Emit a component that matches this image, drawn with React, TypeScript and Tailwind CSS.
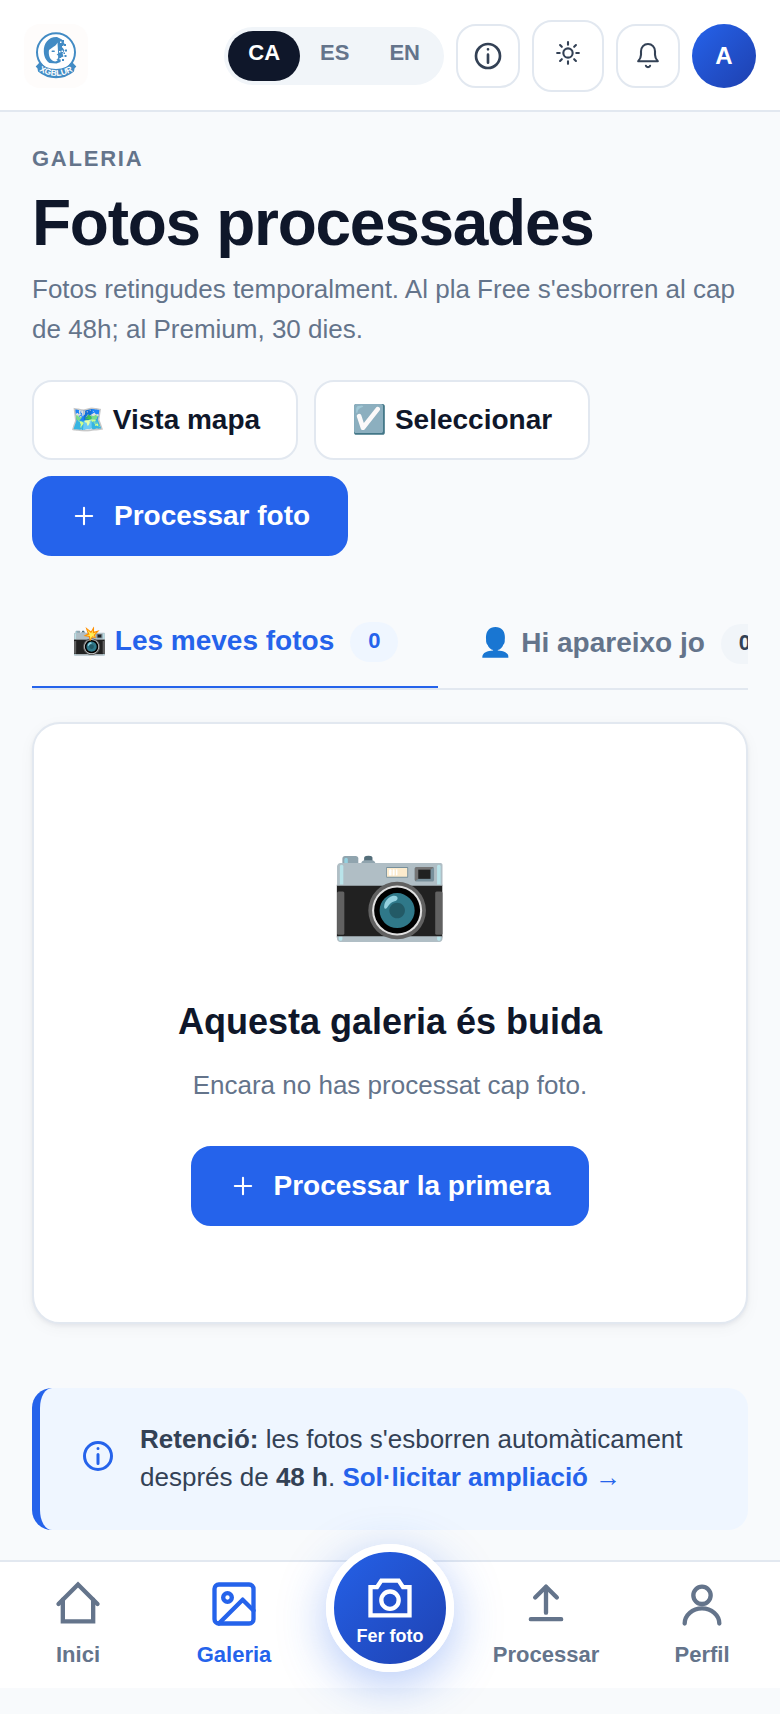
import type { ReactNode } from "react";

type IconProps = { className?: string; stroke?: number; join?: "round" | "miter"; children: ReactNode };

function Icon({ className = "", stroke = 2, join = "round", children }: IconProps) {
  return (
    <svg
      viewBox="0 0 24 24"
      fill="none"
      stroke="currentColor"
      strokeWidth={stroke}
      strokeLinecap="round"
      strokeLinejoin={join}
      aria-hidden="true"
      className={`shrink-0 ${className}`}
    >
      {children}
    </svg>
  );
}

function InfoIcon({ className }: { className: string }) {
  return (
    <Icon className={className}>
      <circle cx="12" cy="12" r="9" />
      <path d="M12 11v6M12 7h.01" />
    </Icon>
  );
}

function PlusIcon() {
  return (
    <Icon className="size-7" stroke={1.8}>
      <path d="M12 5v14M5 12h14" />
    </Icon>
  );
}

function Logo() {
  return (
    <svg viewBox="0 0 64 64" className="size-16" role="img" aria-label="XGBLUR">
      <circle cx="32" cy="28.3" r="19" fill="#fff" stroke="#428bc4" strokeWidth="2" />
      <path
        d="M33 13c-8-.5-13.500 6-13.200 14.500.2 6 2.700 9.500 5.700 11.500l7 .5 4-1.500.5-4.500 2.500-1-1-3 2-3-2-3 2-4-2.500-4z"
        fill="#428bc4"
      />
      <path
        d="M33.500 18.500c-1 3-4.500 4.500-8.500 7.500-.8 5 .8 9.500 4.300 11 2 .8 3.700.3 4.500-1l-1.500-.8 1.800-.7v-3l-1.500-.8 1.500-1.200z"
        fill="#fff"
      />
      <path d="M28.200 27.200h2" stroke="#428bc4" strokeWidth="1.400" strokeLinecap="round" />
      <path
        d="M38 16h2v2h-2zM40 20h2v2h-2zM36.500 20h1.500v1.500h-1.500zM41 25.500h2v2h-2zM37 24h2v1.500h-2zM40.500 31h2v2h-2zM38 35h2v2h-2zM39.500 28.500h1.500v1.500h-1.500zM36 31h1.500v1.500h-1.500z"
        fill="#428bc4"
      />
      <path
        d="M36 17.500h1.500V19H36zM38 22h1.500v1.500H38zM35 27h1.500v1.500H35zM37.500 26.500H39V28h-1.500zM35.500 34H37v1.500h-1.500z"
        fill="#fff"
      />
      <path
        d="M16 38Q21 45 32 45T48 38L52.300 42.500 50.500 44.500 50 47.500Q42 54.300 32 54.300T14 47.500L13.500 44.500 11.700 42.500z"
        fill="#428bc4"
      />
      <path id="logo-arc" d="M12 45Q32 58.600 52 45" fill="none" />
      <text
        fill="#fff"
        fontSize="8.5"
        fontWeight="700"
        textAnchor="middle"
        fontFamily="Liberation Sans, Arial, sans-serif"
      >
        <textPath href="#logo-arc" startOffset="50%">
          XGBLUR
        </textPath>
      </text>
    </svg>
  );
}

const languages = ["CA", "ES", "EN"];

const iconButton =
  "flex items-center justify-center rounded-[20px] border-2 border-[#e2e8f0] bg-white text-[#334155]";

function Header() {
  return (
    <header className="flex items-center justify-between border-b-2 border-[#e2e8f0] bg-white px-6 pt-5 pb-[18px]">
      <a href="#inici" className="rounded-2xl bg-[#fefcfb]">
        <Logo />
      </a>
      <div className="flex items-center gap-3">
        <div role="group" aria-label="Idioma" className="flex rounded-full bg-[#f1f5f9] p-1">
          {languages.map((code, i) => (
            <button
              key={code}
              type="button"
              aria-pressed={i === 0}
              className={`h-[50px] rounded-full px-5 pb-2 text-[22px] font-bold ${
                i === 0 ? "bg-[#0f172a] text-white" : "text-[#64748b]"
              }`}
            >
              {code}
            </button>
          ))}
        </div>
        <button type="button" aria-label="Informació" className={`size-16 ${iconButton}`}>
          <InfoIcon className="size-8" />
        </button>
        <button type="button" aria-label="Canvia el tema" className={`size-[72px] pb-1.5 ${iconButton}`}>
          <Icon className="size-7" stroke={1.8}>
            <circle cx="12" cy="12" r="4" />
            <path d="M12 2.700v2.200M12 19.100v2.200M2.700 12h2.200M19.100 12h2.200M5.200 5.200l1.500 1.500M17.300 17.300l1.500 1.500M5.200 18.800l1.500-1.500M17.300 6.700l1.500-1.500" />
          </Icon>
        </button>
        <button type="button" aria-label="Notificacions" className={`size-16 ${iconButton}`}>
          <Icon className="size-7" stroke={1.8}>
            <path d="M3.600 16.500h16.800C19 15 18 13.500 18 11V8c0-3.500-2.500-6.300-6-6.300S6 4.500 6 8v3c0 2.500-1 4-2.400 5.500z" />
            <path d="M10.200 20.400c.4 1.500 3.200 1.500 3.600 0" />
          </Icon>
        </button>
        <button
          type="button"
          aria-label="Compte"
          className="size-16 rounded-full bg-linear-135 from-[#2563eb] to-[#1e40af] text-2xl font-bold text-white"
        >
          A
        </button>
      </div>
    </header>
  );
}

const buttonBase =
  "flex h-20 items-center justify-center gap-4 rounded-[20px] border-2 px-9 text-[28px] font-bold";
const secondaryButton = `${buttonBase} border-[#e2e8f0] bg-white text-[#0f172a]`;
const primaryButton = `${buttonBase} border-[#2563eb] bg-[#2563eb] text-white`;

function Tabs() {
  return (
    <div
      role="tablist"
      className="mt-[42px] flex h-[92px] overflow-hidden border-b-2 border-[#e2e8f0] text-[28px] font-bold whitespace-nowrap"
    >
      <button
        type="button"
        role="tab"
        aria-selected="true"
        className="flex shrink-0 items-center gap-4 border-b-2 border-[#2563eb] px-10 text-[#2563eb]"
      >
        <span className="pb-0.5">📸 Les meves fotos</span>
        <span className="flex h-10 items-center rounded-full bg-[#eff6ff] px-[18px] pb-1 text-[22px]">0</span>
      </button>
      <button
        type="button"
        role="tab"
        aria-selected="false"
        className="flex shrink-0 items-center gap-4 px-10 pt-0.5 text-[#64748b]"
      >
        <span className="pb-0.5">👤 Hi apareixo jo</span>
        <span className="flex h-10 items-center rounded-full bg-[#f1f5f9] px-[18px] pb-1 text-[22px] text-[#334155]">
          0
        </span>
      </button>
    </div>
  );
}

type NavItemProps = { label: string; active?: boolean; join?: "round" | "miter"; children: ReactNode };

function NavItem({ label, active = false, join, children }: NavItemProps) {
  return (
    <a
      href={`#${label.toLowerCase()}`}
      aria-current={active ? "page" : undefined}
      className={`flex flex-col items-center gap-3 pt-4 text-[22px] leading-[26px] font-bold ${
        active ? "text-[#2563eb]" : "text-[#64748b]"
      }`}
    >
      <Icon className="size-[52px]" join={join}>
        {children}
      </Icon>
      {label}
    </a>
  );
}

function BottomNav() {
  return (
    <nav className="relative grid h-32 grid-cols-5 border-t-2 border-[#e2e8f0] bg-white">
      <NavItem label="Inici" join="miter">
        <path d="M3 12l9-9 9 9" />
        <path d="M5 10v10h14V10" />
      </NavItem>
      <NavItem label="Galeria" active>
        <rect x="3" y="3" width="18" height="18" rx="2" />
        <circle cx="9" cy="9" r="2" />
        <path d="M21 15l-5-5L5 21" />
      </NavItem>
      <div className="flex justify-center">
        <button
          type="button"
          className="-mt-[18px] flex size-32 shrink-0 flex-col items-center rounded-full border-8 border-white bg-linear-135 from-[#2563eb] to-[#1e40af] bg-origin-border pt-5 text-lg leading-6 font-bold text-white shadow-[0_12px_48px_rgba(37,99,235,0.35)]"
        >
          <Icon className="size-[52px]" join="miter">
            <path d="M3 7h3l2-3h8l2 3h3v13H3z" />
            <circle cx="12" cy="13" r="4" />
          </Icon>
          Fer foto
        </button>
      </div>
      <NavItem label="Processar">
        <path d="M12 16V4M7 9l5-5 5 5M5 19h14" />
      </NavItem>
      <NavItem label="Perfil">
        <circle cx="12" cy="8" r="4" />
        <path d="M4 21a8 7 0 0 1 16 0" />
      </NavItem>
    </nav>
  );
}

export default function App() {
  return (
    <div className="min-h-screen bg-[#f8fafc] pb-[26px] font-['Liberation_Sans',Arial,sans-serif] text-[#0f172a]">
      <Header />
      <main className="px-8 pt-[33px] pb-[30px]">
        <p className="text-[22px] leading-7 font-bold tracking-[0.08em] text-[#64748b]">GALERIA</p>
        <h1 className="mt-4 text-[64px] leading-[68px] font-bold tracking-[-0.02em]">Fotos processades</h1>
        <p className="mt-3 text-[26px] leading-10 text-[#64748b]">
          Fotos retingudes temporalment. Al pla Free s'esborren al cap de 48h; al Premium, 30 dies.
        </p>
        <div className="mt-[31px] flex flex-wrap gap-4">
          <button type="button" className={secondaryButton}>
            🗺️ Vista mapa
          </button>
          <button type="button" className={secondaryButton}>
            ☑️ Seleccionar
          </button>
          <button type="button" className={primaryButton}>
            <PlusIcon />
            Processar foto
          </button>
        </div>

        <Tabs />

        <section className="mt-8 flex flex-col items-center rounded-[28px] border-2 border-[#e2e8f0] bg-white px-8 py-24 text-center shadow-[0_2px_4px_rgba(15,23,42,0.06),0_4px_16px_rgba(15,23,42,0.04)]">
          <div aria-hidden="true" className="text-[96px] leading-[138px]">
            📷
          </div>
          <h2 className="mt-[42px] text-4xl leading-11 font-bold">Aquesta galeria és buida</h2>
          <p className="mt-5 text-[26px] leading-[42px] text-[#64748b]">Encara no has processat cap foto.</p>
          <button type="button" className={`mt-10 ${primaryButton}`}>
            <PlusIcon />
            Processar la primera
          </button>
        </section>

        <aside className="mt-16 flex items-center gap-6 rounded-[20px] border-l-8 border-[#2563eb] bg-[#eff6ff] px-10 pt-8 pb-[34px] text-[#334155]">
          <span className="pb-1 text-[#2563eb]">
            <InfoIcon className="size-9" />
          </span>
          <p className="text-[26px] leading-[38px]">
            <strong>Retenció:</strong> les fotos s'esborren automàticament després de <strong>48 h</strong>.{" "}
            <a href="#ampliacio" className="font-bold text-[#2563eb]">
              Sol·licitar ampliació →
            </a>
          </p>
        </aside>
      </main>
      <BottomNav />
    </div>
  );
}
